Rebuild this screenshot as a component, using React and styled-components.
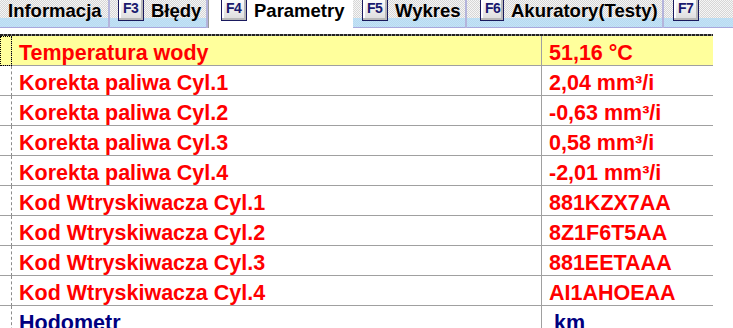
import { Fragment } from 'react'
import styled, { createGlobalStyle } from 'styled-components'

const GlobalStyle = createGlobalStyle`
  html, body {
    margin: 0;
    padding: 0;
    background: #ffffff;
    overflow: hidden;
  }
  body {
    font-family: "Liberation Sans", Arial, sans-serif;
  }
`

const Page = styled.div`
  width: 733px;
  height: 328px;
  overflow: hidden;
  background: #fff;
`

const TabBar = styled.div`
  display: flex;
  height: 28px;
  width: 733px;
  overflow: hidden;
`

const Tab = styled.div`
  box-sizing: border-box;
  flex: 0 0 ${p => p.w}px;
  display: flex;
  align-items: flex-start;
  gap: 7px;
  padding-left: ${p => p.pad}px;
  height: 28px;
  font-size: 18.5px;
  font-weight: bold;
  color: #000;
  background: ${p => p.active
    ? '#ffffff'
    : `linear-gradient(to bottom, transparent 0 18px, rgba(176, 220, 248, 0.75) 18px 27px, #a8a8dc 27px 28px),
       repeating-conic-gradient(#d6d6d6 0 25%, #f6f6f6 0 50%) 0 0 / 2px 2px`};
  border-right: ${p => p.active ? 'none' : '2px solid #b4b4dc'};
  border-left: ${p => p.active ? '1px solid #9a9a9a' : 'none'};

  span {
    line-height: 20px;
    margin-top: 1px;
    white-space: nowrap;
  }
`

const Key = styled.div`
  box-sizing: border-box;
  width: ${p => p.w || 26}px;
  height: 23px;
  margin-top: -2px;
  flex: 0 0 auto;
  border: 1px solid #1a1a5e;
  border-top: none;
  background: linear-gradient(to bottom, #ffffff, #dcdcdc);
  box-shadow: inset -2px -2px 0 #b8b8b8, inset 2px 0 0 #ffffff;
  color: #1a1a6e;
  font-size: 14px;
  font-weight: bold;
  padding-left: 4px;
  line-height: 20px;
  letter-spacing: -0.5px;
`

const Divider = styled.div`
  margin: 6px 0 0 0;
  width: 713px;
  height: 2px;
  background: repeating-linear-gradient(to right, #222 0 3px, #888 3px 4px);
`

const Table = styled.div`
  width: 713px;
  display: grid;
  grid-template-columns: 12px 529px 172px;
`

const Cell = styled.div`
  box-sizing: border-box;
  height: 30px;
  border-bottom: 1px solid #a0a0a0;
  background: ${p => p.hl ? '#ffff9c' : '#ffffff'};
  color: ${p => p.tone === 'navy' ? '#000080' : '#ff0000'};
  font-size: 21.5px;
  font-weight: bold;
  line-height: 34px;
  padding-left: ${p => p.pad ?? 7}px;
  white-space: nowrap;
  overflow: hidden;
`

const Marker = styled(Cell)`
  padding: 0;
  border-right: 1px dashed #8c8c8c;
  outline: ${p => p.hl ? '1px dotted #000' : 'none'};
  outline-offset: -1px;
`

const ValueCell = styled(Cell)`
  border-left: 1px solid #a0a0a0;
`

const tabs = [
  { w: 110, pad: 8, text: 'Informacja' },
  { w: 98, pad: 8, key: 'F3', text: 'Błędy' },
  { w: 145, pad: 12, key: 'F4', text: 'Parametry', active: true },
  { w: 114, pad: 9, key: 'F5', text: 'Wykres' },
  { w: 197, pad: 13, key: 'F6', kw: 24, text: 'Akuratory(Testy)' },
  { w: 80, pad: 9, key: 'F7' },
]

const rows = [
  { name: 'Temperatura wody', value: '51,16 °C', hl: true },
  { name: 'Korekta paliwa Cyl.1', value: '2,04 mm³/i' },
  { name: 'Korekta paliwa Cyl.2', value: '-0,63 mm³/i' },
  { name: 'Korekta paliwa Cyl.3', value: '0,58 mm³/i' },
  { name: 'Korekta paliwa Cyl.4', value: '-2,01 mm³/i' },
  { name: 'Kod Wtryskiwacza Cyl.1', value: '881KZX7AA' },
  { name: 'Kod Wtryskiwacza Cyl.2', value: '8Z1F6T5AA' },
  { name: 'Kod Wtryskiwacza Cyl.3', value: '881EETAAA' },
  { name: 'Kod Wtryskiwacza Cyl.4', value: 'AI1AHOEAA' },
  { name: 'Hodometr', value: 'km', tone: 'navy', vpad: 12 },
]

export default function App() {
  return (
    <Page>
      <GlobalStyle />
      <TabBar>
        {tabs.map((t, i) => (
          <Tab key={i} w={t.w} pad={t.pad} active={t.active}>
            {t.key && <Key w={t.kw}>{t.key}</Key>}
            {t.text && <span>{t.text}</span>}
          </Tab>
        ))}
      </TabBar>
      <Divider />
      <Table>
        {rows.map((r, i) => (
          <Fragment key={i}>
            <Marker hl={r.hl} />
            <Cell hl={r.hl} tone={r.tone}>{r.name}</Cell>
            <ValueCell hl={r.hl} tone={r.tone} pad={r.vpad}>{r.value}</ValueCell>
          </Fragment>
        ))}
      </Table>
    </Page>
  )
}
